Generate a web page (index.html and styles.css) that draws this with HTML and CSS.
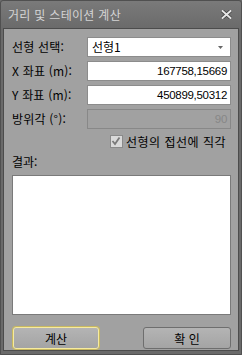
FILE: index.html
```html
<!DOCTYPE html>
<html lang="ko">
<head>
    <meta charset="UTF-8">
    <title>거리 및 스테이션 계산</title>
    <link rel="stylesheet" href="styles.css">
</head>
<body>
    <div class="window">
        <!-- 제목 표시줄 -->
        <div class="titlebar">
            <span class="title">거리 및 스테이션 계산</span>
            <svg class="close" width="11" height="9" viewBox="0 0 11 9">
                <path d="M1.5 1 L9.5 8 M9.5 1 L1.5 8" stroke="#3c3c3c" stroke-width="3.4" stroke-linecap="square"/>
                <path d="M1.5 1 L9.5 8 M9.5 1 L1.5 8" stroke="#e4e4e4" stroke-width="2" stroke-linecap="square"/>
            </svg>
        </div>

        <div class="panel">
            <div class="form-grid">
                <label>선형 선택:</label>
                <div class="combo">
                    <span>선형1</span>
                    <svg class="arrow" width="5" height="3" viewBox="0 0 5 3"><path d="M0 0 H5 L2.5 3 Z" fill="#666"/></svg>
                </div>

                <label>X 좌표 (m):</label>
                <div class="field num">167758,15669</div>

                <label>Y 좌표 (m):</label>
                <div class="field num">450899,50312</div>

                <label>방위각 (°):</label>
                <div class="field num disabled">90</div>
            </div>

            <div class="check-row">
                <span class="checkbox">
                    <svg width="10" height="10" viewBox="0 0 10 10"><path d="M1.5 5 L4 8 L8.5 1.5" fill="none" stroke="#7a7a7a" stroke-width="1.8"/></svg>
                </span>
                <span>선형의 접선에 직각</span>
            </div>

            <label class="result-label">결과:</label>
            <div class="result"></div>

            <div class="buttons">
                <button type="button" class="btn focused">계산</button>
                <button type="button" class="btn">확 인</button>
            </div>
        </div>
    </div>
</body>
</html>
```

FILE: styles.css
```css
body {
    margin: 0;
    padding: 0;
    background-color: #6c6c6c;
    font-family: "Noto Sans CJK KR", "Liberation Sans", sans-serif;
    font-size: 12px;
}
.window {
    width: 242px;
    height: 355px;
    box-sizing: border-box;
    background: linear-gradient(#7a7a7a, #6a6a6a 28px, #6a6a6a);
    border: 1px solid #505050;
    border-radius: 3px 3px 0 0;
    display: flex;
    flex-direction: column;
}
.titlebar {
    height: 27px;
    display: flex;
    align-items: center;
    justify-content: space-between;
    padding: 0 9px 0 7px;
}
.title {
    color: #d4d4d4;
    font-size: 12px;
    letter-spacing: 0.3px;
}
.close {
    margin-top: -1px;
}
.panel {
    margin: 0 2px 3px;
    flex: 1;
    background-color: #a1a1a1;
    border: 1px solid #4c4c4c;
    padding: 8px 7px 0 8px;
    display: flex;
    flex-direction: column;
}
.form-grid {
    display: grid;
    grid-template-columns: 75px 1fr;
    grid-auto-rows: 20px;
    row-gap: 4px;
    align-items: center;
}
.form-grid label {
    color: #000;
    line-height: 20px;
    letter-spacing: 0.2px;
}
.combo, .field {
    height: 20px;
    box-sizing: border-box;
    background: #fff;
    border: 1px solid #8c8c8c;
    display: flex;
    align-items: center;
    padding: 0 3px;
    color: #000;
    line-height: 18px;
}
.combo {
    justify-content: space-between;
    padding: 0 7px 0 4px;
}
.arrow {
    margin-top: 1px;
}
.num {
    justify-content: flex-end;
    font-family: "Liberation Sans", sans-serif;
    font-size: 11.5px;
    letter-spacing: -0.3px;
}
.disabled {
    background: #a1a1a1;
    border-color: #888;
    color: #878787;
}
.check-row {
    display: flex;
    align-items: center;
    justify-content: flex-end;
    gap: 3px;
    margin-top: 5px;
    padding-right: 5px;
    height: 14px;
    color: #000;
    letter-spacing: 0.5px;
}
.checkbox {
    width: 11px;
    height: 11px;
    border: 1px solid #8a8a8a;
    background: #dadada;
    display: flex;
    align-items: center;
    justify-content: center;
}
.result-label {
    margin-top: 7px;
    color: #000;
    line-height: 14px;
}
.result {
    margin-top: 6px;
    height: 140px;
    box-sizing: border-box;
    background: #fff;
    border: 1px solid #7a7a7a;
}
.buttons {
    display: flex;
    justify-content: space-between;
    margin-top: 12px;
    padding-left: 1px;
}
.btn {
    height: 22px;
    width: 88px;
    box-sizing: border-box;
    border: 1px solid #6e6e6e;
    border-radius: 3px;
    background: linear-gradient(#b4b4b4, #a4a4a4);
    font-family: "Noto Sans CJK KR", sans-serif;
    font-size: 12px;
    color: #000;
    padding: 0;
}
.btn.focused {
    width: 86px;
    border: 1px solid #f6eba0;
    box-shadow: 0 0 0 1px #c8b860;
}
```
